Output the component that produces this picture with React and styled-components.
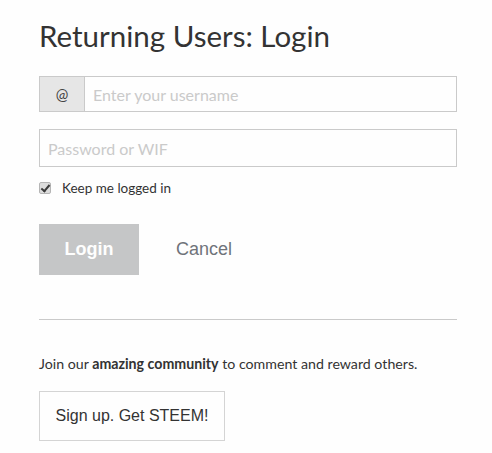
import styled, { createGlobalStyle } from 'styled-components'

const GlobalStyle = createGlobalStyle`
  body {
    margin: 0;
    background: #fefefe;
    font-family: Lato, "Noto Sans", sans-serif;
    color: #333;
  }
`

const Page = styled.div`
  padding: 17px 35px 0 39px;
  width: 418px;
`

const Title = styled.h1`
  margin: 0 0 21px;
  font-size: 29.5px;
  font-weight: 400;
  line-height: 38px;
  color: #333;
`

const InputGroup = styled.div`
  display: flex;
  height: 34px;
  border: 1px solid #cacaca;
  margin-bottom: 17px;
`

const Addon = styled.span`
  width: 44px;
  display: flex;
  align-items: center;
  justify-content: center;
  background: #e6e6e6;
  border-right: 1px solid #cacaca;
  font-size: 15px;
  color: #444;
`

const Field = styled.input`
  flex: 1;
  border: 0;
  outline: 0;
  padding: 0 8px;
  font-family: inherit;
  font-size: 16px;
  background: #fefefe;
  &::placeholder {
    color: #cacaca;
  }
`

const BoxedField = styled(Field)`
  display: block;
  width: 100%;
  box-sizing: border-box;
  height: 38px;
  border: 1px solid #cacaca;
  margin-bottom: 13px;
`

const CheckRow = styled.label`
  display: flex;
  align-items: center;
  gap: 11px;
  font-size: 13.5px;
  color: #333;
  margin-bottom: 28px;
`

const Box = styled.input`
  appearance: none;
  position: relative;
  margin: 0;
  width: 12px;
  height: 12px;
  border: 1px solid #b5b5b5;
  border-radius: 2px;
  background: #dcdcdc;
  &:checked::after {
    content: '';
    position: absolute;
    left: 3px;
    top: 0px;
    width: 3px;
    height: 7px;
    border: solid #3a3a3a;
    border-width: 0 2px 2px 0;
    transform: rotate(40deg);
  }
`

const Actions = styled.div`
  display: flex;
  align-items: center;
  gap: 37px;
  padding-bottom: 44px;
  border-bottom: 1px solid #cacaca;
`

const LoginButton = styled.button`
  width: 100px;
  height: 51px;
  border: 0;
  background: #c5c6c7;
  color: #fefefe;
  font-family: "Liberation Sans", Arial, sans-serif;
  font-weight: 700;
  font-size: 18px;
`

const CancelLink = styled.span`
  font-family: "Liberation Sans", Arial, sans-serif;
  font-size: 18px;
  color: #6f737a;
`

const Blurb = styled.p`
  margin: 34px 0 17px;
  font-size: 14.2px;
  line-height: 20px;
  color: #333;
  b {
    font-weight: 700;
  }
`

const SignUp = styled.button`
  width: 186px;
  height: 50px;
  background: #fefefe;
  border: 1px solid #d4d4d4;
  font-family: "Liberation Sans", Arial, sans-serif;
  font-size: 16px;
  color: #333;
`

export default function App() {
  return (
    <>
      <GlobalStyle />
      <Page>
        <Title>Returning Users: Login</Title>
        <InputGroup>
          <Addon>@</Addon>
          <Field placeholder="Enter your username" />
        </InputGroup>
        <BoxedField type="password" placeholder="Password or WIF" />
        <CheckRow>
          <Box type="checkbox" defaultChecked />
          Keep me logged in
        </CheckRow>
        <Actions>
          <LoginButton>Login</LoginButton>
          <CancelLink>Cancel</CancelLink>
        </Actions>
        <Blurb>
          Join our <b>amazing community</b> to comment and reward others.
        </Blurb>
        <SignUp>Sign up. Get STEEM!</SignUp>
      </Page>
    </>
  )
}
